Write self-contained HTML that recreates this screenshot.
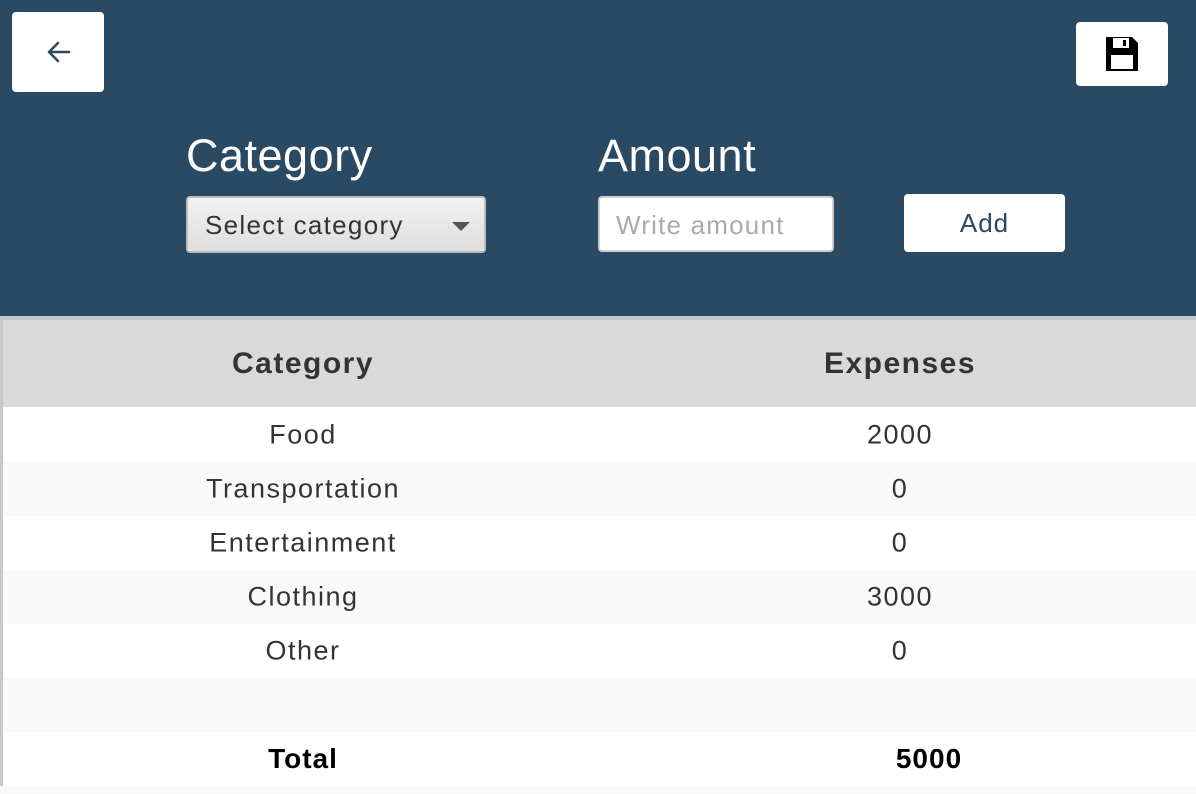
<!DOCTYPE html>
<html><head><style>
*{margin:0;padding:0;box-sizing:border-box}
body{width:1196px;height:794px;overflow:hidden;background:#2a4a63;font-family:"Liberation Sans",sans-serif;position:relative}
.abs{position:absolute}
.btn{background:#fff;border-radius:4px}
.lbl{color:#fff;font-size:45px;letter-spacing:0.5px}
.tbl{position:absolute;left:0;top:316px;width:1196px;height:470px;background:#fff;border-top:4px solid #c8c8c8;border-left:3px solid #c8c8c8}
.row{position:absolute;left:0;width:1193px;height:54px;font-size:27px;letter-spacing:1.5px;color:#333}
.row span{position:absolute;top:50%;transform:translate(-50%,-50%);white-space:nowrap}
</style></head><body>
<div class="abs btn" style="left:12px;top:12px;width:92px;height:80px">
<svg class="abs" style="left:33px;top:27px" width="28" height="26" viewBox="0 0 28 26"><path d="M24 13H4M13 4L4 13l9 9" fill="none" stroke="#2a4a63" stroke-width="2.5" stroke-linecap="round" stroke-linejoin="round"/></svg>
</div>
<div class="abs btn" style="left:1076px;top:22px;width:92px;height:64px">
<svg class="abs" style="left:29px;top:14px" width="34" height="36" viewBox="0 0 34 36"><path d="M1 1h26l6 6v28H1z" fill="#000"/><rect x="6" y="19" width="22" height="14" fill="#fff"/><rect x="8" y="2" width="16" height="10" fill="#fff"/><rect x="18" y="4" width="3" height="6" fill="#000"/></svg>
</div>
<div class="abs lbl" style="left:186px;top:130px">Category</div>
<div class="abs lbl" style="left:598px;top:130px">Amount</div>
<div class="abs" style="left:186px;top:196px;width:300px;height:57px;border:2px solid #bbb;border-radius:4px;background:linear-gradient(#f2f2f2,#dedede);font-size:26px;letter-spacing:1.3px;color:#333;padding:12px 0 0 17px;white-space:nowrap">Select category
<div class="abs" style="left:264px;top:24px;width:0;height:0;border-left:9px solid transparent;border-right:9px solid transparent;border-top:9px solid #555"></div></div>
<div class="abs" style="left:598px;top:196px;width:236px;height:56px;border:2px solid #ccc;border-radius:4px;background:#fff;font-size:26px;letter-spacing:1.2px;color:#aaa;padding:12px 0 0 16px;white-space:nowrap;overflow:hidden">Write amount</div>
<div class="abs btn" style="left:904px;top:194px;width:161px;height:58px;text-align:center;line-height:58px;font-size:26px;letter-spacing:1px;color:#2a4a63">Add</div>
<div class="tbl">
<div class="row" style="top:0;height:87px;background:#d9d9d9;font-weight:bold;font-size:30px"><span style="left:300px">Category</span><span style="left:897px">Expenses</span></div>
<div class="row" style="top:88px"><span style="left:300px">Food</span><span style="left:897px">2000</span></div>
<div class="row" style="top:142px;background:#f9f9f9"><span style="left:300px">Transportation</span><span style="left:897px">0</span></div>
<div class="row" style="top:196px"><span style="left:300px">Entertainment</span><span style="left:897px">0</span></div>
<div class="row" style="top:250px;background:#f9f9f9"><span style="left:300px">Clothing</span><span style="left:897px">3000</span></div>
<div class="row" style="top:304px"><span style="left:300px">Other</span><span style="left:897px">0</span></div>
<div class="row" style="top:358px;background:#f9f9f9"></div>
<div class="row" style="top:412px;font-weight:bold;color:#000;font-size:28px;letter-spacing:1px"><span style="left:300px">Total</span><span style="left:926px">5000</span></div>
</div>
<div class="abs" style="left:0;top:786px;width:1196px;height:8px;background:#f9f9f9"></div>
</body></html>
